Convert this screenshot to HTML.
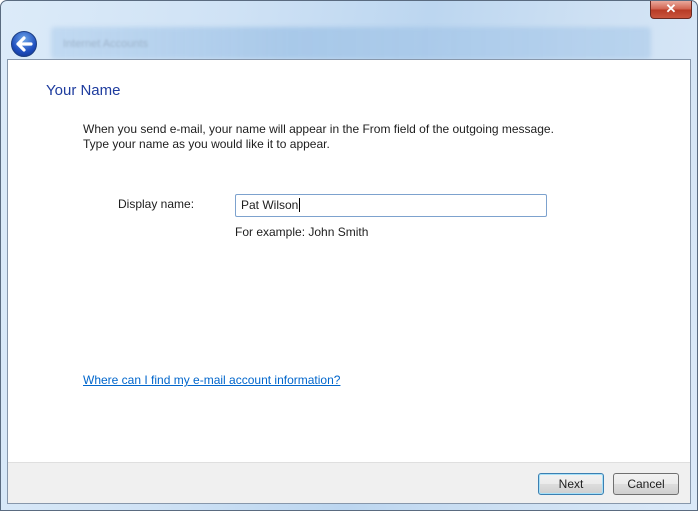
<!DOCTYPE html>
<html><head><meta charset="utf-8"><style>
*{margin:0;padding:0;box-sizing:border-box}
html,body{width:698px;height:511px;overflow:hidden;font-family:"Liberation Sans",sans-serif;font-size:12px;color:#1e1e1e}
#win{position:absolute;left:0;top:0;width:698px;height:511px;border:1px solid #5a6b80;border-radius:7px 7px 0 0;
background:linear-gradient(100deg,#dcebf9 0%,#cfe2f5 30%,#bcd6f0 55%,#cde0f3 75%,#dbe9f8 100%);}
#bar{position:absolute;left:50px;top:26px;width:600px;height:32px;border-radius:4px;
background:linear-gradient(90deg,rgba(190,215,240,.9),rgba(160,195,230,.8) 40%,rgba(175,205,235,.7));filter:blur(2px)}
#bartxt{position:absolute;left:62px;top:37px;color:#9fb5cc;font-size:11px;filter:blur(1px)}
#close{position:absolute;left:649px;top:0;width:42px;height:18px;border:1px solid #6b2a22;border-top:none;border-radius:0 0 4px 4px;
background:linear-gradient(#e9a99c,#d0604c 50%,#b73a25 51%,#c9553e);color:#fff;font-weight:bold;font-size:13px;text-align:center;line-height:16px}
#back{position:absolute;left:10px;top:30px;width:26px;height:26px;border-radius:50%;border:1px solid #1d3f82;
background:radial-gradient(circle at 50% 30%,#6fa7e8,#1f4fbf 60%,#0f2e88)}
#client{position:absolute;left:7px;top:59px;width:684px;height:445px;background:#fff;border:1px solid #8797ab}
#foot{position:absolute;left:0;bottom:0;width:682px;height:41px;background:#f0f0f0;border-top:1px solid #dfdfdf}
.btn{position:absolute;top:10px;width:66px;height:22px;border:1px solid #707070;border-radius:3px;
background:linear-gradient(#f2f2f2,#ebebeb 50%,#dddddd 51%,#cfcfcf);text-align:center;line-height:20px}
#title{position:absolute;left:38px;top:22px;font-size:15px;color:#1e3c9e}
a{color:#0066cc}
</style></head><body>
<div id="win">
<div id="bar"></div><div id="bartxt">Internet Accounts</div>
<div id="close">✕</div>
<div id="back"><svg width="24" height="24" viewBox="0 0 24 24"><path d="M6 12 L12 6 M6 12 L12 18 M6 12 H19" stroke="#fff" stroke-width="3.2" fill="none" stroke-linecap="round"/></svg></div>
</div>
<div id="client">
<div id="title">Your Name</div>
<div style="position:absolute;left:75px;top:62px;line-height:15px">When you send e-mail, your name will appear in the From field of the outgoing message.<br>Type your name as you would like it to appear.</div>
<div style="position:absolute;left:110px;top:137px">Display name:</div>
<div style="position:absolute;left:227px;top:134px;width:312px;height:23px;border:1px solid #7da2ce;border-radius:2px;padding:3px 5px">Pat Wilson<span style="border-left:1px solid #000;margin-left:1px"></span></div>
<div style="position:absolute;left:227px;top:165px">For example: John Smith</div>
<div style="position:absolute;left:75px;top:313px"><a href="#">Where can I find my e-mail account information?</a></div>
<div id="foot">
<div class="btn" style="left:530px;width:66px;border-color:#3c7fb1;box-shadow:inset 0 0 0 1px #a6e0f8">Next</div>
<div class="btn" style="left:605px;width:66px">Cancel</div>
</div>
</div>
</body></html>
